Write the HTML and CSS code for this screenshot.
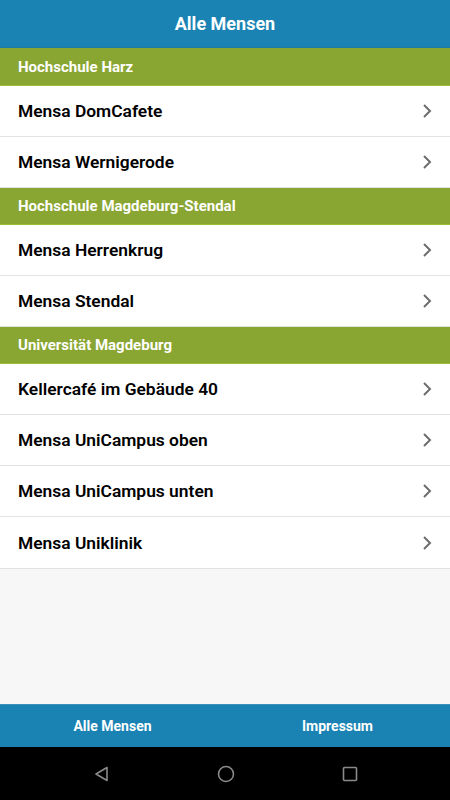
FILE: index.html
```html
<!DOCTYPE html>
<html lang="de">
<head>
<meta charset="utf-8">
<link rel="stylesheet" href="styles.css">
</head>
<body>
<div class="app">
  <header class="topbar">Alle Mensen</header>
  <main class="content">
    <div class="section">Hochschule Harz</div>
    <div class="row"><span>Mensa DomCafete</span><svg class="chev" viewBox="0 0 10 16"><path d="M2 2l6 6-6 6" /></svg></div>
    <div class="row"><span>Mensa Wernigerode</span><svg class="chev" viewBox="0 0 10 16"><path d="M2 2l6 6-6 6" /></svg></div>
    <div class="section">Hochschule Magdeburg-Stendal</div>
    <div class="row"><span>Mensa Herrenkrug</span><svg class="chev" viewBox="0 0 10 16"><path d="M2 2l6 6-6 6" /></svg></div>
    <div class="row"><span>Mensa Stendal</span><svg class="chev" viewBox="0 0 10 16"><path d="M2 2l6 6-6 6" /></svg></div>
    <div class="section">Universität Magdeburg</div>
    <div class="row"><span>Kellercafé im Gebäude 40</span><svg class="chev" viewBox="0 0 10 16"><path d="M2 2l6 6-6 6" /></svg></div>
    <div class="row"><span>Mensa UniCampus oben</span><svg class="chev" viewBox="0 0 10 16"><path d="M2 2l6 6-6 6" /></svg></div>
    <div class="row"><span>Mensa UniCampus unten</span><svg class="chev" viewBox="0 0 10 16"><path d="M2 2l6 6-6 6" /></svg></div>
    <div class="row last"><span>Mensa Uniklinik</span><svg class="chev" viewBox="0 0 10 16"><path d="M2 2l6 6-6 6" /></svg></div>
  </main>
  <footer class="tabbar">
    <div class="tab">Alle Mensen</div>
    <div class="tab">Impressum</div>
  </footer>
  <nav class="sysnav">
    <svg class="navicon" viewBox="0 0 20 20"><path d="M15 3.5v13L4 10z" /></svg>
    <svg class="navicon" viewBox="0 0 20 20"><circle cx="10" cy="10" r="7.5" /></svg>
    <svg class="navicon" viewBox="0 0 20 20"><rect x="3.5" y="3.5" width="13" height="13" rx="1" /></svg>
  </nav>
</div>
</body>
</html>
```
FILE: styles.css
```css
* { box-sizing: border-box; }
html, body { margin: 0; padding: 0; }
body {
  font-family: Roboto, "Liberation Sans", sans-serif;
  background: #000;
}
.app {
  width: 450px;
  height: 800px;
  display: flex;
  flex-direction: column;
  background: #f7f7f7;
}
.topbar {
  height: 48px;
  background: #1a83b3;
  color: #fff;
  font-weight: 700;
  font-size: 18px;
  display: flex;
  align-items: center;
  justify-content: center;
  border-bottom: 1px solid #1c7aa6;
}
.content {
  flex: 1;
  display: flex;
  flex-direction: column;
}
.section {
  height: 37px;
  background: #89a532;
  color: #fff;
  font-weight: 700;
  font-size: 15px;
  padding-left: 18px;
  display: flex;
  align-items: center;
  border-bottom: 1px solid #9bbd32;
}
.content > .section:first-child { height: 38px; }
.row {
  height: 51px;
  background: #fff;
  display: flex;
  align-items: center;
  justify-content: space-between;
  padding: 0 18px;
  font-size: 17.4px;
  font-weight: 600;
  color: #000;
  border-bottom: 1px solid #e2e2e2;
}
.row.last { height: 52px; }
.chev {
  width: 10px;
  height: 16px;
  fill: none;
  stroke: #6d6d6d;
  stroke-width: 2;
}
.tabbar {
  height: 43px;
  background: #1a83b3;
  display: flex;
  border-top: 1px solid #3a91ba;
}
.tab {
  flex: 1;
  display: flex;
  align-items: center;
  justify-content: center;
  color: #fff;
  font-weight: 700;
  font-size: 14px;
}
.sysnav {
  height: 53px;
  background: #000;
  display: flex;
  align-items: center;
  justify-content: center;
  gap: 104px;
  padding-left: 2px;
}
.navicon {
  width: 20px;
  height: 20px;
  fill: none;
  stroke: #8a8a8a;
  stroke-width: 1.6;
  stroke-linejoin: round;
}
```
